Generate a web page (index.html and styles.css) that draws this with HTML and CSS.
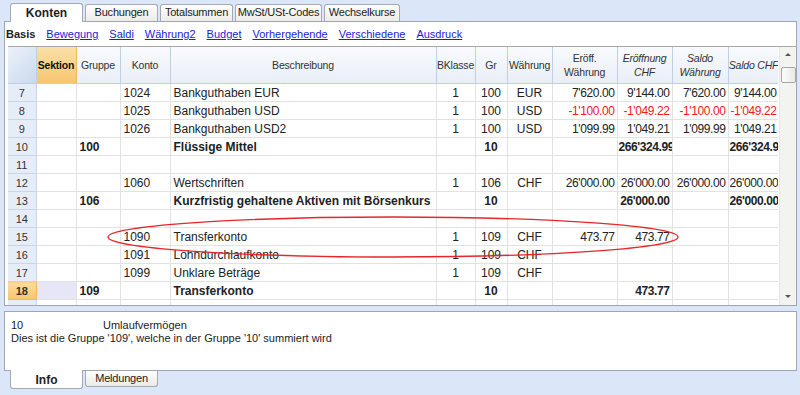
FILE: index.html
```html
<!DOCTYPE html>
<html>
<head>
  <meta charset="UTF-8">
  <meta name="viewport" content="width=device-width, initial-scale=1.0">
  <title>Konten</title>
  <link rel="stylesheet" href="styles.css">
</head>
<body>
  <!-- Document tabs -->
  <div class="tabs tabs-top">
    <div class="tab active">Konten</div>
    <div class="tab w74">Buchungen</div>
    <div class="tab w74">Totalsummen</div>
    <div class="tab w88">MwSt/USt-Codes</div>
    <div class="tab w76">Wechselkurse</div>
  </div>

  <div class="panel main">
    <div class="views">
      <b>Basis</b>
      <a href="#">Bewegung</a>
      <a href="#">Saldi</a>
      <a href="#">Währung2</a>
      <a href="#">Budget</a>
      <a href="#">Vorhergehende</a>
      <a href="#">Verschiedene</a>
      <a href="#">Ausdruck</a>
    </div>

    <div class="grid-wrap">
      <div class="grid-clip">
        <table class="grid">
          <colgroup>
            <col style="width:28px"><col style="width:40px"><col style="width:44px"><col style="width:50px">
            <col style="width:266px"><col style="width:39px"><col style="width:32px"><col style="width:45px">
            <col style="width:65px"><col style="width:55px"><col style="width:56px"><col style="width:51px">
          </colgroup>
          <thead>
            <tr>
              <th class="corner"></th>
              <th class="sel">Sektion</th>
              <th>Gruppe</th>
              <th>Konto</th>
              <th>Beschreibung</th>
              <th>BKlasse</th>
              <th>Gr</th>
              <th>Währung</th>
              <th>Eröff.<br>Währung</th>
              <th class="it">Eröffnung<br>CHF</th>
              <th class="it">Saldo<br>Währung</th>
              <th class="it">Saldo CHF</th>
            </tr>
          </thead>
          <tbody>
            <tr><td class="rn">7</td><td></td><td></td><td>1024</td><td>Bankguthaben EUR</td><td class="c">1</td><td class="c">100</td><td class="c">EUR</td><td class="n">7'620.00</td><td class="n">9'144.00</td><td class="n">7'620.00</td><td class="n">9'144.00</td></tr>
            <tr class="neg"><td class="rn">8</td><td></td><td></td><td>1025</td><td>Bankguthaben USD</td><td class="c">1</td><td class="c">100</td><td class="c">USD</td><td class="n">-1'100.00</td><td class="n">-1'049.22</td><td class="n">-1'100.00</td><td class="n">-1'049.22</td></tr>
            <tr><td class="rn">9</td><td></td><td></td><td>1026</td><td>Bankguthaben USD2</td><td class="c">1</td><td class="c">100</td><td class="c">USD</td><td class="n">1'099.99</td><td class="n">1'049.21</td><td class="n">1'099.99</td><td class="n">1'049.21</td></tr>
            <tr class="grp"><td class="rn">10</td><td></td><td>100</td><td></td><td>Flüssige Mittel</td><td></td><td class="c">10</td><td></td><td></td><td class="n">266'324.99</td><td></td><td class="n">266'324.99</td></tr>
            <tr><td class="rn">11</td><td></td><td></td><td></td><td></td><td></td><td></td><td></td><td></td><td></td><td></td><td></td></tr>
            <tr><td class="rn">12</td><td></td><td></td><td>1060</td><td>Wertschriften</td><td class="c">1</td><td class="c">106</td><td class="c">CHF</td><td class="n">26'000.00</td><td class="n">26'000.00</td><td class="n">26'000.00</td><td class="n">26'000.00</td></tr>
            <tr class="grp"><td class="rn">13</td><td></td><td>106</td><td></td><td>Kurzfristig gehaltene Aktiven mit Börsenkurs</td><td></td><td class="c">10</td><td></td><td></td><td class="n">26'000.00</td><td></td><td class="n">26'000.00</td></tr>
            <tr><td class="rn">14</td><td></td><td></td><td></td><td></td><td></td><td></td><td></td><td></td><td></td><td></td><td></td></tr>
            <tr><td class="rn">15</td><td></td><td></td><td>1090</td><td>Transferkonto</td><td class="c">1</td><td class="c">109</td><td class="c">CHF</td><td class="n">473.77</td><td class="n">473.77</td><td></td><td></td></tr>
            <tr><td class="rn">16</td><td></td><td></td><td>1091</td><td>Lohndurchlaufkonto</td><td class="c">1</td><td class="c">109</td><td class="c">CHF</td><td></td><td></td><td></td><td></td></tr>
            <tr><td class="rn">17</td><td></td><td></td><td>1099</td><td>Unklare Beträge</td><td class="c">1</td><td class="c">109</td><td class="c">CHF</td><td></td><td></td><td></td><td></td></tr>
            <tr class="grp current"><td class="rn">18</td><td class="cur"></td><td>109</td><td></td><td>Transferkonto</td><td></td><td class="c">10</td><td></td><td></td><td class="n">473.77</td><td></td><td></td></tr>
            <tr><td class="rn">19</td><td></td><td></td><td></td><td></td><td></td><td></td><td></td><td></td><td></td><td></td><td></td></tr>
          </tbody>
        </table>
      </div>

      <div class="vscroll">
        <div class="arrow up"></div>
        <div class="thumb"></div>
        <div class="track"></div>
        <div class="arrow down"></div>
      </div>
    </div>
  </div>

  <div class="panel info">
    <div class="info-line"><span class="info-key">10</span>Umlaufvermögen</div>
    <div class="info-line">Dies ist die Gruppe '109', welche in der Gruppe '10' summiert wird</div>
  </div>

  <div class="tabs tabs-bottom">
    <div class="tab active">Info</div>
    <div class="tab w74">Meldungen</div>
  </div>

  <!-- red highlight drawn over the grid -->
  <svg class="mark" width="800" height="395" viewBox="0 0 800 395">
    <ellipse cx="393" cy="237" rx="285" ry="20" fill="none" stroke="#e8262a" stroke-width="1.4"/>
  </svg>
</body>
</html>
```

FILE: styles.css
```css
/* Window background in the XP blue tone */
body {
  margin: 0;
  width: 800px;
  height: 395px;
  overflow: hidden;
  position: relative;
  background: #dce6f9;
  font-family: "Liberation Sans", Arial, sans-serif;
  font-size: 11px;
  color: #222;
}

/* Tab strips */
.tabs {
  display: flex;
  padding-left: 10px;
  gap: 2px;
}
.tabs-top {
  height: 21px;
  align-items: flex-end;
}
.tab {
  box-sizing: border-box;
  height: 17px;
  line-height: 15px;
  text-align: center;
  font-size: 11px;
  letter-spacing: -0.2px;
  white-space: nowrap;
  color: #222;
  background: linear-gradient(#fefefe, #ecebe6);
  border: 1px solid #a3a9b6;
  border-bottom: none;
  border-radius: 3px 3px 0 0;
}
.tab.active {
  width: 73px;
  height: 19px;
  line-height: 19px;
  background: #fff;
  font-weight: bold;
  font-size: 12px;
  letter-spacing: 0;
  position: relative;
  top: 1px;
  z-index: 1;
}
.w74 { width: 73px; }
.w76 { width: 76px; }
.w88 { width: 87px; }

.tabs-bottom {
  align-items: flex-start;
}
.tabs-bottom .tab {
  border: 1px solid #a3a9b6;
  border-top: none;
  border-radius: 0 0 3px 3px;
  height: 16px;
  line-height: 15px;
}
.tabs-bottom .tab.active {
  height: 19px;
  line-height: 20px;
  top: -1px;
}

/* White framed panels */
.panel {
  box-sizing: border-box;
  margin: 0 3px 0 4px;
  background: #fff;
  border: 1px solid #9ea6b4;
}
.main {
  height: 285px;
  padding-left: 3px;
}
.info {
  margin-top: 5px;
  height: 60px;
  padding: 7px 6px;
  font-size: 11px;
}
.info-line {
  line-height: 13px;
}
.info-key {
  display: inline-block;
  width: 92px;
}

/* View links above the grid */
.views {
  height: 24px;
  display: flex;
  align-items: center;
  gap: 11px;
  font-size: 11px;
}
.views b {
  margin-left: -2px;
}
.views a {
  color: #1a1ae0;
  text-decoration: underline;
}

/* Grid */
.grid-wrap {
  display: flex;
  border-top: 1px solid #a7a7a7;
  height: 258px;
}
.grid-clip {
  width: 772px;
  overflow: hidden;
}
.grid {
  table-layout: fixed;
  border-collapse: collapse;
  width: 771px;
}
.grid th {
  height: 36px;
  padding: 0;
  font-weight: normal;
  font-size: 10.5px;
  letter-spacing: -0.2px;
  line-height: 14px;
  color: #333;
  background: linear-gradient(#f8fafd, #e9eef7);
  border-right: 1px solid #bfd0e6;
  border-bottom: 1px solid #bfd0e6;
  white-space: nowrap;
  overflow: hidden;
}
.grid th.it {
  font-style: italic;
}
.grid th.corner {
  background: linear-gradient(135deg, #edf2fa, #cad8ee);
}
.grid th.sel {
  font-weight: bold;
  color: #111;
  background: linear-gradient(#fbe0a6, #f6c56f);
  border-right-color: #f0b860;
}
.grid td {
  height: 17px;
  padding: 0 3px;
  font-size: 12px;
  border: 1px solid #e2e2e2;
  white-space: nowrap;
  overflow: hidden;
}
.grid td.rn {
  font-size: 11px;
  text-align: center;
  color: #333;
  background: #e6edf8;
  border-color: #c9d6ea;
  border-left: none;
}
.grid td.c { text-align: center; }
.grid td.n {
  text-align: right;
  padding: 0 2px 0 1px;
  letter-spacing: -0.4px;
}
.neg td.n { color: #f01818; }
.grp td { font-weight: bold; }
.grp td.rn { font-weight: normal; }
.current td.rn {
  font-weight: bold;
  background: linear-gradient(#fbdca0, #f6c56f);
  border-color: #efb85c;
}
.current td.cur {
  background: #e6e6f6;
}

/* Vertical scrollbar */
.vscroll {
  width: 16px;
  margin-left: 1px;
  display: flex;
  flex-direction: column;
  background: #f3f3ef;
  border-left: 1px solid #e6e6e6;
}
.arrow {
  height: 17px;
  position: relative;
}
.arrow::after {
  content: "";
  position: absolute;
  left: 5px;
  border-left: 3px solid transparent;
  border-right: 3px solid transparent;
}
.arrow.up::after {
  top: 6px;
  border-bottom: 3px solid #555;
}
.arrow.down::after {
  top: 7px;
  border-top: 3px solid #555;
}
.thumb {
  box-sizing: border-box;
  height: 16px;
  margin: 3px 0 0 1px;
  background: linear-gradient(90deg, #fdfdfd, #e8e8e4);
  border: 1px solid #a8a8a8;
  border-radius: 2px;
}
.track { flex: 1; }

/* Overlay marker */
.mark {
  position: absolute;
  left: 0;
  top: 0;
  pointer-events: none;
}
```
